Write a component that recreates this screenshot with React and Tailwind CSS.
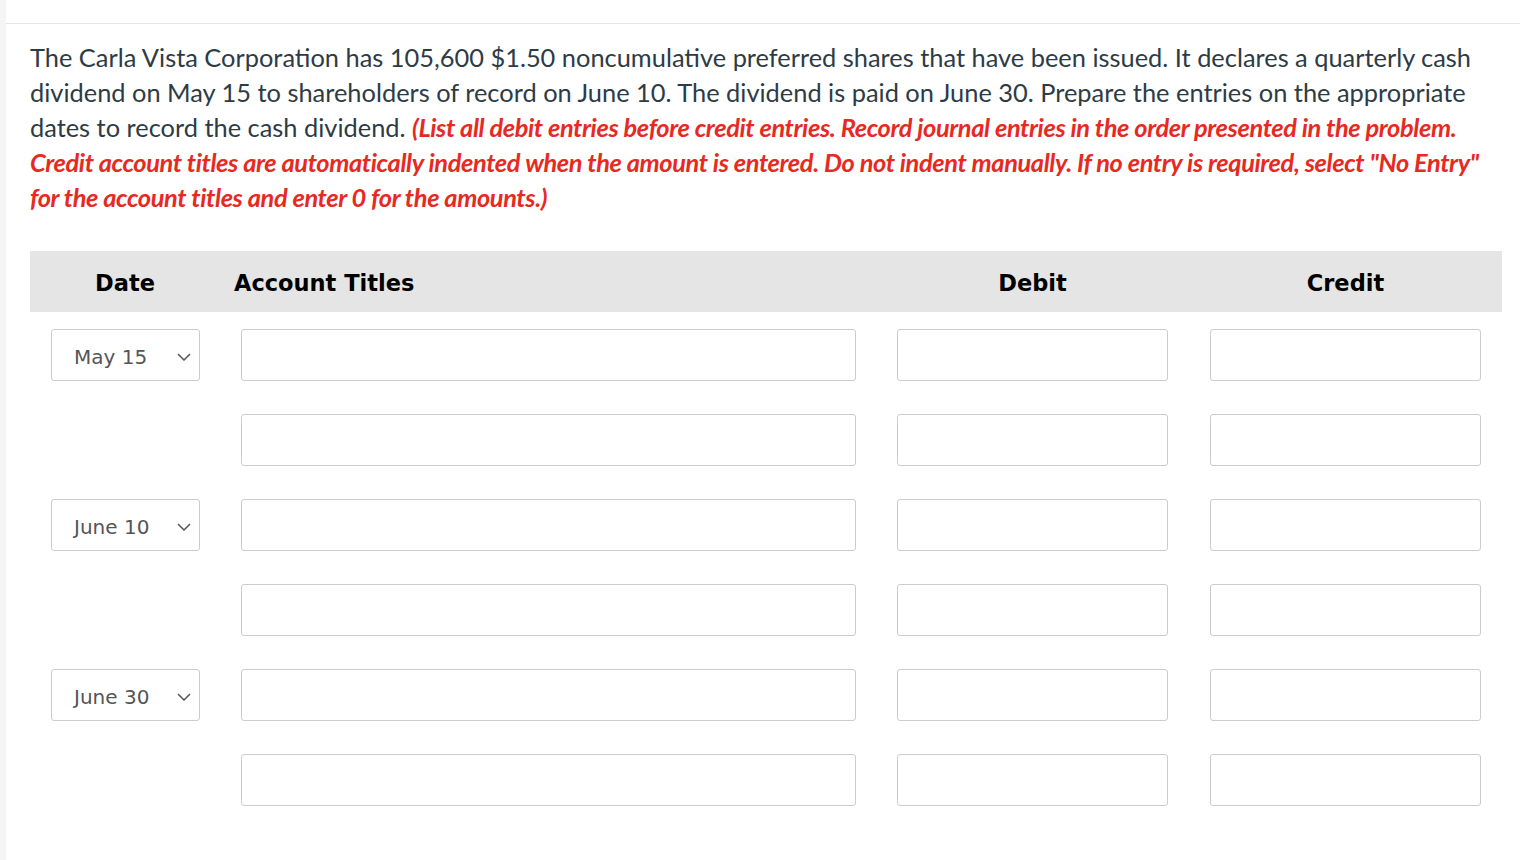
import React from "react";

const rows = [
  { date: "May 15" },
  { date: null },
  { date: "June 10" },
  { date: null },
  { date: "June 30" },
  { date: null },
];

const Chevron = () => (
  <svg width="14" height="8" viewBox="0 0 14 8" fill="none" className="shrink-0">
    <path d="M1 1l6 6 6-6" stroke="#555555" strokeWidth="1.5" />
  </svg>
);

const App = () => {
  return (
    <div className="min-h-screen flex bg-white">
      <div className="w-[6px] shrink-0 bg-[#f5f5f5]" />
      <div className="flex-1">
        {/* cut-off heading */}
        <div className="h-[24px] border-b border-[#e6e6e6]" />

        <div className="pl-[24px] pr-[18px] pt-[16px]">
          <p className="font-['Lato',sans-serif] text-[25.4px] leading-[35px] text-[#2d3b45] whitespace-nowrap">
            The Carla Vista Corporation has 105,600 $1.50 noncumulative preferred shares that have been issued. It declares a quarterly cash
            <br />
            dividend on May 15 to shareholders of record on June 10. The dividend is paid on June 30. Prepare the entries on the appropriate
            <br />
            dates to record the cash dividend.{" "}
            <span className="italic font-bold text-[#e8291f] tracking-[-0.015em]">
              (List all debit entries before credit entries. Record journal entries in the order presented in the problem.
              <br />
              Credit account titles are automatically indented when the amount is entered. Do not indent manually. If no entry is required, select "No Entry"
              <br />
              for the account titles and enter 0 for the amounts.)
            </span>
          </p>

          {/* Table */}
          <div className="mt-[36px] font-['DejaVu_Sans',sans-serif]">
            <div className="h-[61px] bg-[#e5e5e5] flex items-center pt-[5px] text-[22.5px] font-bold text-black">
              <div className="w-[190px] text-center">Date</div>
              <div className="w-[677px] pl-[14px]">Account Titles</div>
              <div className="w-[271px] text-center">Debit</div>
              <div className="w-[42px]" />
              <div className="w-[271px] text-center">Credit</div>
            </div>

            <div className="pt-[17px] flex flex-col gap-[33px]">
              {rows.map((row, i) => (
                <div key={i} className="flex pl-[21px] gap-[41px]">
                  <div className="w-[149px] h-[52px]">
                    {row.date && (
                      <div className="h-full border border-[#cccccc] rounded-[3px] flex items-center justify-between pl-[22px] pr-[8px] pt-[3px]">
                        <span className="text-[20px] text-[#555555]">{row.date}</span>
                        <Chevron />
                      </div>
                    )}
                  </div>
                  <div className="w-[615px] h-[52px] border border-[#cccccc] rounded-[3px] bg-white" />
                  <div className="w-[271px] h-[52px] border border-[#cccccc] rounded-[3px] bg-white" />
                  <div className="w-[271px] h-[52px] border border-[#cccccc] rounded-[3px] bg-white ml-[1px]" />
                </div>
              ))}
            </div>
          </div>
        </div>
      </div>
    </div>
  );
};

export default App;
